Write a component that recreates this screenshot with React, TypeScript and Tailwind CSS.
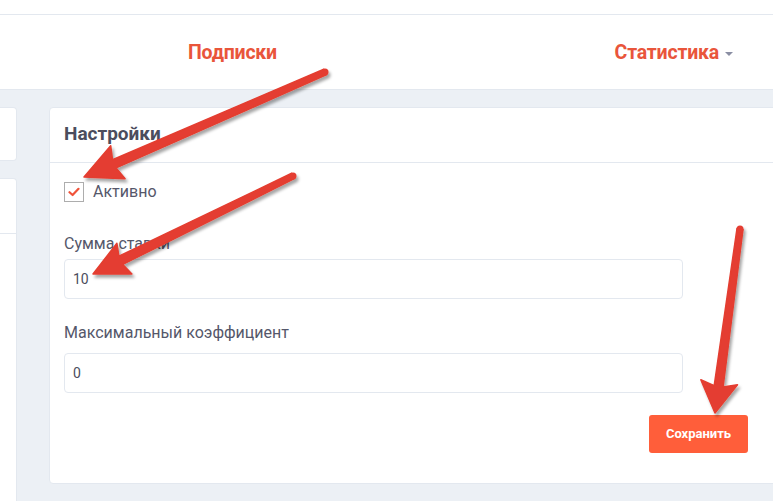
import React from "react";

type Pt = [number, number];

function arrowPoints(t: Pt, p: Pt, w: number, hl: number, hw: number, tw: number): string {
  const dx = p[0] - t[0];
  const dy = p[1] - t[1];
  const len = Math.hypot(dx, dy);
  const ux = dx / len;
  const uy = dy / len;
  const nx = -uy;
  const ny = ux;
  const bx = p[0] - ux * hl;
  const by = p[1] - uy * hl;
  const pts: Pt[] = [
    [t[0] + nx * tw / 2, t[1] + ny * tw / 2],
    [bx + nx * w / 2, by + ny * w / 2],
    [bx + nx * hw / 2 - ux * 4, by + ny * hw / 2 - uy * 4],
    [p[0], p[1]],
    [bx - nx * hw / 2 - ux * 4, by - ny * hw / 2 - uy * 4],
    [bx - nx * w / 2, by - ny * w / 2],
    [t[0] - nx * tw / 2, t[1] - ny * tw / 2],
  ];
  return pts.map((q) => `${q[0].toFixed(1)},${q[1].toFixed(1)}`).join(" ");
}

function Arrows() {
  const arrows: { t: Pt; p: Pt; w: number; hl: number; hw: number; tw: number }[] = [
    { t: [325, 72], p: [84, 177], w: 9, hl: 33, hw: 36, tw: 6 },
    { t: [293, 176], p: [93, 274], w: 9, hl: 31, hw: 34, tw: 6 },
    { t: [740, 229], p: [715, 413], w: 9, hl: 27, hw: 37, tw: 6 },
  ];
  return (
    <svg className="absolute left-0 top-0 pointer-events-none" width="773" height="501" viewBox="0 0 773 501">
      <defs>
        <filter id="sh" x="-20%" y="-20%" width="140%" height="140%">
          <feDropShadow dx="2" dy="3" stdDeviation="1.5" floodColor="#000" floodOpacity="0.35" />
        </filter>
      </defs>
      {arrows.map((a, i) => (
        <g key={i} filter="url(#sh)">
          <polygon points={arrowPoints(a.t, a.p, a.w, a.hl, a.hw, a.tw)} fill="#e43d30" strokeLinejoin="round" stroke="#e43d30" strokeWidth="1.5" />
          <circle cx={a.t[0]} cy={a.t[1]} r={a.tw / 2 + 0.5} fill="#e43d30" />
        </g>
      ))}
    </svg>
  );
}

export default function App() {
  return (
    <div
      className="relative w-[773px] h-[501px] overflow-hidden bg-[#ecf0f5]"
      style={{ fontFamily: "Roboto, 'Liberation Sans', sans-serif" }}
    >
      <div className="h-[15px] bg-white border-b border-[#e3e8ef]" />
      <div className="h-[75px] bg-white border-b border-[#e3e8ef] flex items-center">
        <span className="ml-[188px] mt-[2px] text-[19.5px] font-bold text-[#e9553b] tracking-[-0.2px]">Подписки</span>
        <span className="ml-auto mr-[40px] mt-[2px] flex items-center gap-[6px]">
          <span className="text-[19.5px] font-bold text-[#e9553b] tracking-[-0.2px]">Статистика</span>
          <span className="w-0 h-0 border-l-[4px] border-r-[4px] border-t-[4px] border-l-transparent border-r-transparent border-t-[#8a8ea3] mt-[2px]" />
        </span>
      </div>

      <div className="flex pt-[17px] gap-[32px]">
        <div className="w-[17px] flex flex-col gap-[17px] shrink-0">
          <div className="h-[54px] bg-white rounded-r-[4px] border border-l-0 border-[#e3e8ef]" />
          <div className="h-[400px] bg-white rounded-tr-[4px] border border-l-0 border-[#e3e8ef]">
            <div className="h-[55px] border-b border-[#e3e8ef]" />
          </div>
        </div>

        <div className="flex flex-col gap-[17px] shrink-0">
          <div className="w-[740px] h-[377px] bg-white rounded-[4px] border border-[#e3e8ef]">
            <div className="h-[55px] border-b border-[#e3e8ef] flex items-center px-[14px]">
              <span className="text-[19px] font-bold text-[#4b4d5d] mt-[-2px]">Настройки</span>
            </div>
            <div className="px-[14px] pt-[17px]">
              <div className="flex items-center gap-[9px]">
                <div className="w-[20px] h-[20px] border border-[#adadad] flex items-center justify-center bg-white">
                  <svg width="12" height="10" viewBox="0 0 12 10">
                    <path d="M1.5 5.2 L4.6 8 L10.5 1.8" fill="none" stroke="#f0533a" strokeWidth="2.2" strokeLinecap="round" strokeLinejoin="round" />
                  </svg>
                </div>
                <span className="text-[16px] text-[#55576a]">Активно</span>
              </div>

              <div className="mt-[30px] text-[16px] leading-[20px] text-[#55576a]">Сумма ставки</div>
              <div className="mt-[5px] w-[619px] h-[40px] rounded-[4px] border border-[#e3e8ef] flex items-center px-[8px] text-[14px] text-[#4b4d5d]">
                10
              </div>

              <div className="mt-[24px] text-[16px] leading-[20px] text-[#55576a]">Максимальный коэффициент</div>
              <div className="mt-[10px] w-[619px] h-[40px] rounded-[4px] border border-[#e3e8ef] flex items-center px-[8px] text-[14px] text-[#4b4d5d]">
                0
              </div>

              <div className="mt-[22px] ml-[585px] w-[99px] h-[38px] rounded-[3px] bg-[#ff5e3a] flex items-center justify-center text-white text-[13px] font-bold">
                Сохранить
              </div>
            </div>
          </div>
          <div className="w-[740px] h-[40px] bg-white rounded-[4px] border border-[#e3e8ef]" />
        </div>
      </div>

      <Arrows />
    </div>
  );
}
